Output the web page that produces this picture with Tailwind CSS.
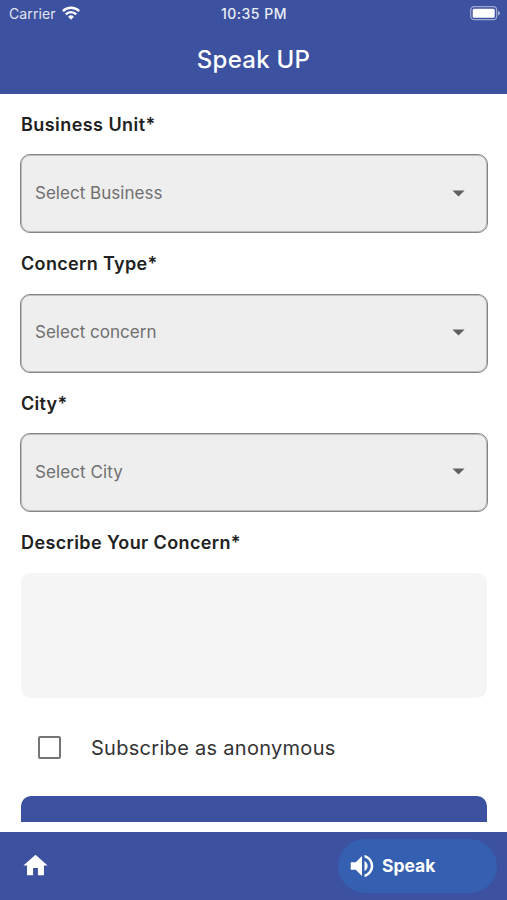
<!DOCTYPE html>
<html lang="en">
<head>
<meta charset="utf-8">
<title>Speak UP</title>
<script src="https://cdn.jsdelivr.net/npm/@tailwindcss/browser@4"></script>
</head>
<body class="bg-white font-['Inter','Liberation_Sans',sans-serif]">
<div class="flex flex-col w-[507px] h-[900px] overflow-hidden">
  <header class="h-[93.5px] shrink-0 bg-[#3c519f] text-white">
    <div class="grid grid-cols-3 items-center h-7 pl-[9px] pr-[6px]">
      <div class="flex items-center gap-[6px] text-[14px] text-white/85">
        <span class="-mt-[2px] tracking-[0.1px]">Carrier</span>
        <svg class="w-[18px] h-[14px] -mt-[2px]" viewBox="0 0 18 14" fill="none" stroke="#fff" stroke-width="2.4"><path d="M.8 5.1a11.7 11.7 0 0 1 16.4 0M3.8 8.3a7.3 7.3 0 0 1 10.4 0"/><path d="M9 13.8 6.1 10.8a4.1 4.1 0 0 1 5.8 0Z" fill="#fff" stroke="none"/></svg>
      </div>
      <span class="-ml-[2px] -mt-[2px] text-center text-[14px] font-medium tracking-[0.5px] text-white/90">10:35 PM</span>
      <svg class="justify-self-end w-[32px] h-[16px] -mt-[2px]" viewBox="0 0 32 16"><rect x="1.7" y="1.7" width="26" height="13" rx="3.5" fill="none" stroke="#fff" stroke-opacity=".5" stroke-width="1.2"/><rect x="3.7" y="3.7" width="22" height="9" rx="1.5" fill="#fff"/><path d="M29 6v4.4q2-.6 2-2.2T29 6Z" fill="#fff" fill-opacity=".55"/></svg>
    </div>
    <h1 class="mt-[14px] text-center text-[24px] leading-9 font-medium tracking-[0.25px]">Speak UP</h1>
  </header>

  <main class="flex-1 overflow-hidden px-[20px] pt-[19px] text-[#212121]">
    <section class="h-[139.3px]">
      <h2 class="h-6 leading-6 pt-[0.5px] pl-[1px] text-[18px] font-semibold tracking-[0.44px]">Business Unit*</h2>
      <div class="mt-[17.8px] h-[79px] w-[468px] flex items-center justify-between rounded-[10px] border border-[#858585] shadow-[inset_0_0_0_1px_#bdbdbd] bg-[#eeeeee] pl-[14px] pr-[22px] text-[17px] text-[#707070]"><span class="tracking-[0.02px]">Select Business</span><svg class="w-[13px] h-[7px] -mt-[1px]" viewBox="0 0 13 7"><path d="M.4.5h12.2L6.5 6.6Z" fill="#606060"/></svg></div>
    </section>
    <section class="h-[139.3px]">
      <h2 class="h-6 leading-6 pt-[0.5px] pl-[1px] text-[18px] font-semibold tracking-[0.34px]">Concern Type*</h2>
      <div class="mt-[17.8px] h-[79px] w-[468px] flex items-center justify-between rounded-[10px] border border-[#858585] shadow-[inset_0_0_0_1px_#bdbdbd] bg-[#eeeeee] pl-[14px] pr-[22px] text-[17px] text-[#707070]"><span class="tracking-[0.02px]">Select concern</span><svg class="w-[13px] h-[7px] -mt-[1px]" viewBox="0 0 13 7"><path d="M.4.5h12.2L6.5 6.6Z" fill="#606060"/></svg></div>
    </section>
    <section class="h-[139.3px]">
      <h2 class="h-6 leading-6 pt-[0.5px] pl-[1px] text-[18px] font-semibold tracking-[0.3px]">City*</h2>
      <div class="mt-[17.8px] h-[79px] w-[468px] flex items-center justify-between rounded-[10px] border border-[#858585] shadow-[inset_0_0_0_1px_#bdbdbd] bg-[#eeeeee] pl-[14px] pr-[22px] text-[17px] text-[#707070]"><span class="tracking-[0.1px]">Select City</span><svg class="w-[13px] h-[7px] -mt-[1px]" viewBox="0 0 13 7"><path d="M.4.5h12.2L6.5 6.6Z" fill="#606060"/></svg></div>
    </section>
    <section>
      <h2 class="h-6 leading-6 pt-[0.5px] pl-[1px] text-[18px] font-semibold tracking-[0.38px]">Describe Your Concern*</h2>
      <div class="mt-[18.6px] ml-[1px] h-[125px] w-[466px] rounded-[10px] bg-[#f5f5f5]"></div>
    </section>
    <label class="mt-[34px] ml-[18px] h-8 flex items-center gap-[30px]">
      <span class="size-[23px] rounded-[2px] border-[2.5px] border-[#757575]"></span>
      <span class="text-[20px] tracking-[0.29px] text-[#333]">Subscribe as anonymous</span>
    </label>
    <div class="mt-[32px] ml-[1px] h-[26px] w-[466px] rounded-t-[10px] bg-[#3c519f]"></div>
  </main>

  <nav class="h-[68.5px] shrink-0 flex items-center justify-between bg-[#3c519f] pl-[20.5px] pr-[10px] text-white">
    <svg class="size-[29px]" viewBox="0 0 24 24" fill="currentColor"><path d="M10 20v-6h4v6h5v-8h3L12 3 2 12h3v8z"/></svg>
    <div class="flex items-center h-[54px] w-[159px] rounded-full bg-[#355fb0] pl-[9px] gap-[5px]">
      <svg class="size-[30px]" viewBox="0 0 24 24" fill="currentColor"><path d="M3 9v6h4l5 5V4L7 9H3zm13.5 3c0-1.77-1.02-3.29-2.5-4.03v8.05c1.48-.73 2.5-2.25 2.5-4.02zM14 3.23v2.06c2.89.86 5 3.54 5 6.71s-2.11 5.85-5 6.71v2.06c4.01-.91 7-4.49 7-8.77s-2.99-7.86-7-8.77z"/></svg>
      <span class="text-[17.5px] font-bold">Speak</span>
    </div>
  </nav>
</div>
</body>
</html>
